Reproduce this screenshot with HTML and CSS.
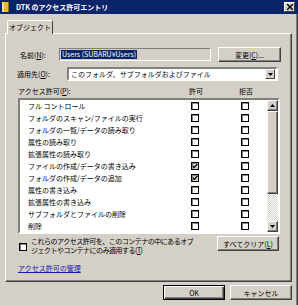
FILE: index.html
```html
<!DOCTYPE html>
<html lang="ja">
<head>
    <meta charset="UTF-8">
    <title>DTK のアクセス許可エントリ</title>
    <link rel="stylesheet" href="styles.css">
</head>
<body>
    <div class="window">
        <div class="title-bar">
            <svg class="title-icon" width="7" height="10" viewBox="0 0 7 10">
                <rect x="0" y="0" width="7" height="10" fill="#e8b830"/>
                <rect x="0" y="0" width="2" height="10" fill="#f8e080"/>
                <rect x="6" y="0" width="1" height="10" fill="#a07010"/>
            </svg>
            <div class="title-text">DTK のアクセス許可エントリ</div>
            <div class="close-btn">
                <svg width="6" height="6" viewBox="0 0 6 6">
                    <path d="M0 0 L6 6 M6 0 L0 6" stroke="#000" stroke-width="1.4"/>
                </svg>
            </div>
        </div>

        <div class="tabs">
            <div class="tab">オブジェクト</div>
        </div>

        <div class="panel">
            <div class="row name-row">
                <div class="label name-label">名前(<u>N</u>):</div>
                <div class="name-field"><span class="selected">Users (SUBARU¥Users)</span></div>
                <button class="btn change-btn">変更(<u>C</u>)...</button>
            </div>

            <div class="row apply-row">
                <div class="label apply-label">適用先(<u>O</u>):</div>
                <div class="select">
                    <div class="select-text">このフォルダ、サブフォルダおよびファイル</div>
                    <div class="select-arrow">
                        <svg width="5" height="3" viewBox="0 0 5 3"><path d="M0 0 H5 L2.5 3 Z" fill="#000"/></svg>
                    </div>
                </div>
            </div>

            <div class="perm-header">
                <div class="perm-title">アクセス許可(<u>P</u>):</div>
                <div class="col-head">許可</div>
                <div class="col-head">拒否</div>
            </div>

            <div class="list">
                <div class="list-rows">
                    <div class="perm-row"><span>フル コントロール</span><i class="box"></i><i class="box"></i></div>
                    <div class="perm-row"><span>フォルダのスキャン/ファイルの実行</span><i class="box"></i><i class="box"></i></div>
                    <div class="perm-row"><span>フォルダの一覧/データの読み取り</span><i class="box"></i><i class="box"></i></div>
                    <div class="perm-row"><span>属性の読み取り</span><i class="box"></i><i class="box"></i></div>
                    <div class="perm-row"><span>拡張属性の読み取り</span><i class="box"></i><i class="box"></i></div>
                    <div class="perm-row"><span>ファイルの作成/データの書き込み</span><i class="box checked"></i><i class="box"></i></div>
                    <div class="perm-row"><span>フォルダの作成/データの追加</span><i class="box checked"></i><i class="box"></i></div>
                    <div class="perm-row"><span>属性の書き込み</span><i class="box"></i><i class="box"></i></div>
                    <div class="perm-row"><span>拡張属性の書き込み</span><i class="box"></i><i class="box"></i></div>
                    <div class="perm-row"><span>サブフォルダとファイルの削除</span><i class="box"></i><i class="box"></i></div>
                    <div class="perm-row"><span>削除</span><i class="box"></i><i class="box"></i></div>
                </div>
                <div class="scrollbar">
                    <div class="scroll-btn">
                        <svg width="5" height="3" viewBox="0 0 5 3"><path d="M0 3 H5 L2.5 0 Z" fill="#000"/></svg>
                    </div>
                    <div class="scroll-thumb"></div>
                    <div class="scroll-track"></div>
                    <div class="scroll-btn">
                        <svg width="5" height="3" viewBox="0 0 5 3"><path d="M0 0 H5 L2.5 3 Z" fill="#000"/></svg>
                    </div>
                </div>
            </div>

            <div class="apply-only">
                <i class="box"></i>
                <div class="apply-text">これらのアクセス許可を、このコンテナの中にあるオブ<br>ジェクトやコンテナにのみ適用する(<u>T</u>)</div>
                <button class="btn clear-btn">すべてクリア(<u>L</u>)</button>
            </div>

            <a class="manage-link" href="#">アクセス許可の管理</a>
        </div>

        <div class="footer">
            <button class="btn ok-btn">OK</button>
            <button class="btn">キャンセル</button>
        </div>
    </div>
</body>
</html>
```

FILE: styles.css
```css
:root {
    --face: #d4d0c8;
    --shadow: #808080;
    --dark: #404040;
    --title: #0a246a;
}

body {
    margin: 0;
    width: 298px;
    height: 305px;
    overflow: hidden;
    background: var(--face);
    font-family: "Noto Sans CJK JP", sans-serif;
    font-size: 7px;
    color: #000;
}
u {
    text-decoration: underline;
    text-underline-offset: 1px;
}
.window {
    height: 305px;
    box-shadow: inset -1px 0 #404040, inset -2px 0 #808080;
}
.title-bar {
    height: 14px;
    background: var(--title);
    display: flex;
    align-items: center;
    padding-left: 2px;
}
.title-icon {
    margin-right: 7px;
}
.title-text {
    color: #fff;
    font-weight: bold;
    line-height: 14px;
    flex: 1;
}
.close-btn {
    width: 9px;
    height: 8px;
    margin-right: 3px;
    background: var(--face);
    border: 1px solid;
    border-color: #fff var(--dark) var(--dark) #fff;
    display: flex;
    align-items: center;
    justify-content: center;
}
.tabs {
    display: flex;
    padding: 6px 0 0 7px;
    height: 13px;
}
.tab {
    position: relative;
    z-index: 1;
    width: 44px;
    height: 13px;
    line-height: 13px;
    text-align: center;
    background: var(--face);
    border: 1px solid;
    border-color: #fff var(--dark) transparent #fff;
    border-bottom: none;
    border-radius: 2px 2px 0 0;
}
.panel {
    margin: 0 6px 0 5px;
    height: 247px;
    border: 1px solid;
    border-color: #fff var(--dark) var(--dark) #fff;
    box-shadow: inset -1px -1px var(--shadow);
}
.row {
    display: flex;
    align-items: center;
}
.label {
    line-height: 10px;
    white-space: nowrap;
}
.name-row {
    margin-top: 13px;
    height: 15px;
    padding-left: 14px;
}
.name-label {
    width: 39px;
}
.name-field {
    width: 148px;
    height: 9px;
    padding: 1px;
    border: 1px solid;
    border-color: var(--shadow) #fff #fff var(--shadow);
    display: flex;
    align-items: center;
}
.selected {
    background: var(--title);
    color: #fff;
    line-height: 9px;
    padding: 0 1px;
    white-space: nowrap;
}
.btn {
    font-family: inherit;
    font-size: 7px;
    padding: 0;
    height: 15px;
    background: var(--face);
    color: #000;
    border: 1px solid;
    border-color: #fff var(--dark) var(--dark) #fff;
    box-shadow: inset -1px -1px var(--shadow);
    line-height: 12px;
}
.change-btn {
    width: 63px;
    margin-left: 7px;
}
.apply-row {
    margin-top: 5px;
    height: 14px;
    padding-left: 11px;
}
.apply-label {
    width: 50px;
}
.select {
    width: 207px;
    height: 10px;
    border: 2px solid;
    border-color: var(--shadow) #fff #fff var(--shadow);
    background: #fff;
    display: flex;
    align-items: center;
}
.select-text {
    flex: 1;
    padding-left: 2px;
    line-height: 10px;
    white-space: nowrap;
}
.select-arrow {
    width: 8px;
    height: 8px;
    margin-right: 1px;
    background: var(--face);
    border: 1px solid;
    border-color: #fff var(--dark) var(--dark) #fff;
    display: flex;
    align-items: center;
    justify-content: center;
}
.perm-header {
    display: grid;
    grid-template-columns: 170px 50px 50px;
    margin: 5px 0 2px 12px;
    height: 10px;
    line-height: 10px;
}
.col-head {
    padding-left: 1px;
}
.list {
    display: flex;
    margin-left: 12px;
    width: 258px;
    height: 132px;
    border: 2px solid;
    border-color: var(--shadow) #fff #fff var(--shadow);
    background: #fff;
}
.list-rows {
    flex: 1;
}
.perm-row {
    display: grid;
    grid-template-columns: 171px 50px 1fr;
    align-items: center;
    height: 12px;
    line-height: 12px;
    white-space: nowrap;
}
.perm-row span {
    padding-left: 8px;
}
.box {
    display: block;
    width: 6px;
    height: 6px;
    background: #fff;
    border: 1px solid #000;
    box-shadow: inset 1px 1px var(--shadow);
}
.box.checked {
    background: var(--face) url("data:image/svg+xml;utf8,<svg xmlns='http://www.w3.org/2000/svg' width='6' height='6'><path d='M0.5 2.5 L2.2 4.5 L5.5 0.8' fill='none' stroke='black' stroke-width='1.2'/></svg>") center no-repeat;
}
.scrollbar {
    width: 11px;
    display: flex;
    flex-direction: column;
}
.scroll-btn {
    height: 9px;
    background: var(--face);
    border: 1px solid;
    border-color: #fff var(--dark) var(--dark) #fff;
    box-shadow: inset -1px -1px var(--shadow);
    display: flex;
    align-items: center;
    justify-content: center;
}
.scroll-thumb {
    height: 81px;
    background: var(--face);
    border: 1px solid;
    border-color: #fff var(--dark) var(--dark) #fff;
    box-shadow: inset -1px -1px var(--shadow);
}
.scroll-track {
    flex: 1;
    background: repeating-conic-gradient(#fff 0 25%, var(--face) 0 50%) 0 0 / 2px 2px;
}
.apply-only {
    display: flex;
    align-items: flex-start;
    margin-top: 2px;
    padding-left: 13px;
}
.apply-only .box {
    margin-top: 7px;
    box-shadow: inset 1px 1px var(--shadow);
}
.apply-text {
    margin: 1px 0 0 4px;
    width: 186px;
    line-height: 9px;
    letter-spacing: -0.5px;
    white-space: nowrap;
}
.clear-btn {
    width: 62px;
}
.manage-link {
    display: inline-block;
    margin: 9px 0 0 12px;
    color: #1a1aa6;
    line-height: 9px;
    text-decoration: underline;
}
.footer {
    display: flex;
    justify-content: flex-end;
    gap: 5px;
    margin: 3px 6px 0 0;
}
.footer .btn {
    width: 62px;
}
.ok-btn {
    border: 1px solid #000;
    box-shadow: inset 1px 1px #fff, inset -1px -1px var(--dark), inset -2px -2px var(--shadow);
}
```
